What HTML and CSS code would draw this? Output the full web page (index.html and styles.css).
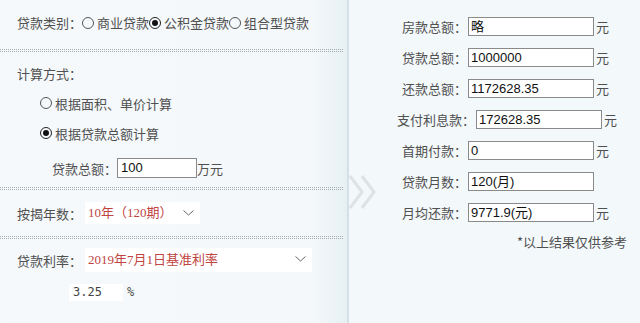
FILE: index.html
```html
<!DOCTYPE html>
<html lang="zh-CN">
<head>
    <meta charset="UTF-8">
    <meta name="viewport" content="width=device-width, initial-scale=1.0">
    <title>公积金贷款计算器</title>
    <link rel="stylesheet" href="styles.css">
</head>
<body>
    <div class="calc">
        <div class="left">
            <div class="sec sec-type">
                <span class="label">贷款类别：</span>
                <span class="radio"></span><span class="opt">商业贷款</span>
                <span class="radio on"></span><span class="opt">公积金贷款</span>
                <span class="radio"></span><span class="opt">组合型贷款</span>
            </div>
            <div class="dots"></div>

            <div class="sec sec-way">
                <div class="row">计算方式：</div>
                <div class="row indent"><span class="radio"></span><span class="opt">根据面积、单价计算</span></div>
                <div class="row indent"><span class="radio on"></span><span class="opt">根据贷款总额计算</span></div>
                <div class="row amount">
                    <span class="label">贷款总额：</span>
                    <span class="box">100</span>
                    <span>万元</span>
                </div>
            </div>
            <div class="dots"></div>

            <div class="sec sec-years">
                <span class="label">按揭年数：</span>
                <span class="select short">10年（120期）
                    <svg class="chev" width="11" height="6" viewBox="0 0 11 6"><path d="M0.5 0.5 L5.5 5 L10.5 0.5" fill="none" stroke="#666" stroke-width="1"/></svg>
                </span>
            </div>
            <div class="dots"></div>

            <div class="sec sec-rate">
                <div class="row">
                    <span class="label">贷款利率：</span>
                    <span class="select long">2019年7月1日基准利率
                        <svg class="chev" width="11" height="6" viewBox="0 0 11 6"><path d="M0.5 0.5 L5.5 5 L10.5 0.5" fill="none" stroke="#666" stroke-width="1"/></svg>
                    </span>
                </div>
                <div class="row rate">
                    <span class="rate-box">3.25</span>
                    <span class="pct">%</span>
                </div>
            </div>
            <div class="dots"></div>
        </div>

        <svg class="arrows" width="30" height="36" viewBox="0 0 30 36">
            <path d="M2 2 L14 18 L2 34" fill="none" stroke="#dde2e5" stroke-width="3"/>
            <path d="M14 2 L26 18 L14 34" fill="none" stroke="#dde2e5" stroke-width="3"/>
        </svg>

        <div class="right">
            <div class="res"><span class="rlabel">房款总额：</span><span class="field">略</span><span>元</span></div>
            <div class="res"><span class="rlabel">贷款总额：</span><span class="field">1000000</span><span>元</span></div>
            <div class="res"><span class="rlabel">还款总额：</span><span class="field">1172628.35</span><span>元</span></div>
            <div class="res wide"><span class="rlabel">支付利息款：</span><span class="field">172628.35</span><span>元</span></div>
            <div class="res"><span class="rlabel">首期付款：</span><span class="field">0</span><span>元</span></div>
            <div class="res"><span class="rlabel">贷款月数：</span><span class="field">120(月)</span></div>
            <div class="res"><span class="rlabel">月均还款：</span><span class="field">9771.9(元)</span><span>元</span></div>
            <div class="note">*以上结果仅供参考</div>
        </div>
    </div>
</body>
</html>
```

FILE: styles.css
```css
html, body {
    margin: 0;
    padding: 0;
}
body {
    font-family: "Noto Sans CJK SC", "Noto Sans", sans-serif;
    font-size: 13px;
    color: #505050;
    background-color: #f3f8fb;
}
.calc {
    display: flex;
    position: relative;
    width: 640px;
    height: 323px;
    overflow: hidden;
}
.left {
    width: 347px;
    border-right: 2px solid #d3e0e5;
    background: linear-gradient(to right, #f6f9fb 0%, #f4f8fa 90%, #e6f0f3 100%);
}
.right {
    flex: 1;
    padding-top: 17px;
    background-color: #f3f8fb;
}

/* left side */
.sec {
    padding-left: 17px;
}
.sec-type {
    height: 45px;
    padding-bottom: 4px;
    display: flex;
    align-items: center;
}
.sec-way {
    height: 129px;
    padding-top: 6px;
}
.sec-years {
    height: 46px;
    display: flex;
    align-items: center;
}
.sec-rate {
    height: 81px;
    padding-top: 6px;
}
.dots {
    width: 343px;
    height: 1px;
    border-top: 1px dotted #a4acb0;
    border-bottom: 1px dotted #a4acb0;
}
.row {
    height: 30px;
    display: flex;
    align-items: center;
}
.indent {
    padding-left: 23px;
}
.amount {
    margin-top: 5px;
    padding-left: 35px;
}
.radio {
    display: inline-block;
    box-sizing: border-box;
    width: 12px;
    height: 12px;
    border: 1px solid #555;
    border-radius: 50%;
    position: relative;
    flex-shrink: 0;
}
.radio.on {
    border-color: #222;
}
.radio.on::after {
    content: "";
    position: absolute;
    left: 2px;
    top: 2px;
    width: 6px;
    height: 6px;
    border-radius: 50%;
    background-color: #111;
}
.opt {
    margin-left: 3px;
}
.box {
    box-sizing: border-box;
    width: 80px;
    height: 20px;
    line-height: 18px;
    padding-left: 3px;
    border: 1px solid #8a8a8a;
    background-color: #fff;
    color: #111;
    font-family: "Liberation Sans", Arial, sans-serif;
}
.select {
    position: relative;
    margin-left: 3px;
    height: 22px;
    line-height: 22px;
    padding-left: 3px;
    background-color: #fff;
    color: #c0443f;
    font-family: "Liberation Serif", "Noto Sans CJK SC", serif;
    box-sizing: border-box;
}
.select.short {
    width: 115px;
}
.select.long {
    width: 227px;
    height: 24px;
    line-height: 24px;
}
.chev {
    position: absolute;
    right: 6px;
    top: 8px;
}
.rate {
    margin-top: 2px;
    padding-left: 52px;
}
.rate-box {
    width: 50px;
    height: 17px;
    line-height: 17px;
    padding-left: 4px;
    background-color: #fff;
    font-family: "DejaVu Sans Mono", monospace;
    font-size: 12px;
    color: #444;
}
.pct {
    margin-left: 4px;
    font-family: "DejaVu Sans Mono", monospace;
    font-size: 12px;
}

.arrows {
    position: absolute;
    left: 348px;
    top: 174px;
}

/* right side */
.res {
    display: flex;
    align-items: center;
    height: 19px;
    margin-bottom: 12px;
    padding-left: 53px;
}
.res.wide {
    padding-left: 48px;
}
.rlabel {
    margin-right: 1px;
}
.field {
    box-sizing: border-box;
    width: 126px;
    height: 19px;
    line-height: 17px;
    padding-left: 2px;
    margin-right: 2px;
    border: 1px solid #8a8a8a;
    background-color: #fff;
    color: #111;
    font-family: "Liberation Sans", Arial, sans-serif;
    font-size: 13px;
}
.note {
    text-align: right;
    padding-right: 13px;
    margin-top: -2px;
}
```
